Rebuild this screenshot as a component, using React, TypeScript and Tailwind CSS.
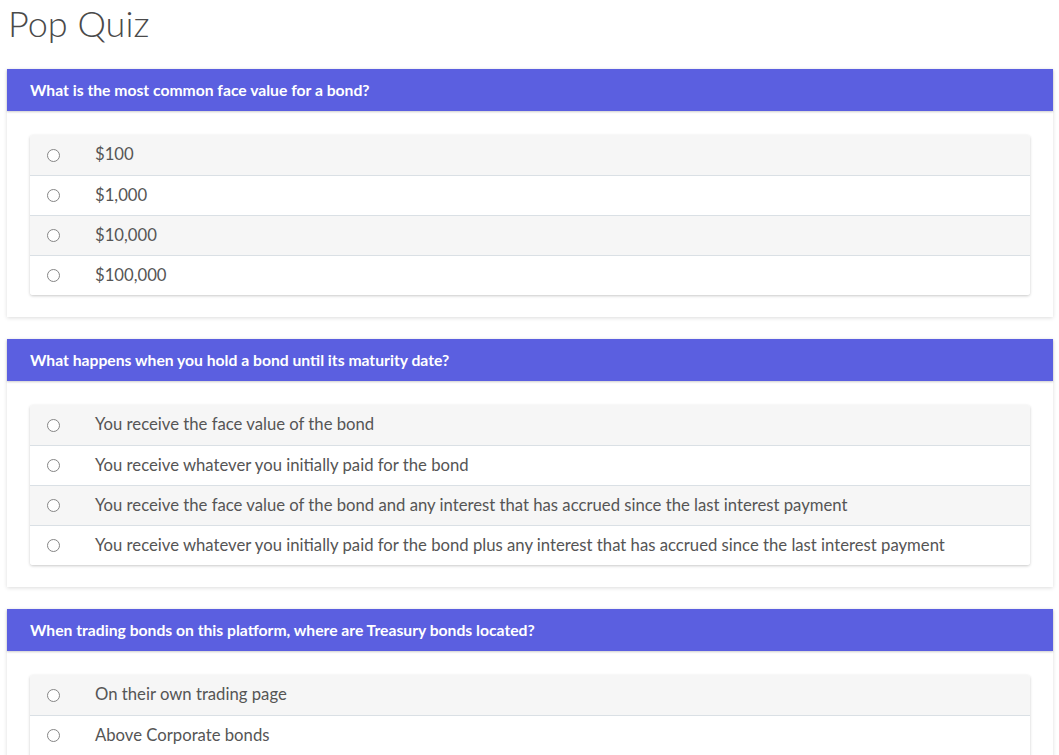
import React from "react";

type Question = { q: string; answers: string[] };

const QUESTIONS: Question[] = [
  {
    q: "What is the most common face value for a bond?",
    answers: ["$100", "$1,000", "$10,000", "$100,000"],
  },
  {
    q: "What happens when you hold a bond until its maturity date?",
    answers: [
      "You receive the face value of the bond",
      "You receive whatever you initially paid for the bond",
      "You receive the face value of the bond and any interest that has accrued since the last interest payment",
      "You receive whatever you initially paid for the bond plus any interest that has accrued since the last interest payment",
    ],
  },
  {
    q: "When trading bonds on this platform, where are Treasury bonds located?",
    answers: [
      "On their own trading page",
      "Above Corporate bonds",
      "Below Corporate bonds",
      "Next to Municipal bonds",
    ],
  },
];

function QuizCard({ item }: { item: Question }) {
  return (
    <div className="mb-[22px] bg-white shadow-[0_1px_4px_rgba(0,0,0,0.14)]">
      {/* question header */}
      <div className="flex h-[42px] items-center bg-[#5b5fe0] px-[23px] pt-px text-[15.7px] font-bold text-white shadow-[0_1px_2px_rgba(0,0,0,0.2)]">
        {item.q}
      </div>
      <div className="px-[23px] pb-[22px] pt-[24px]">
        <ul className="overflow-hidden rounded-[3px] shadow-[0_1px_3px_rgba(0,0,0,0.22)]">
          {item.answers.map((a, i) => (
            <li
              key={a}
              className={`flex h-[40px] items-center border-t border-[#dae0e5] first:border-t-0 ${
                i % 2 === 0 ? "bg-[#f6f6f6]" : "bg-white"
              }`}
            >
              <span className="ml-[17px] h-[13px] w-[13px] shrink-0 rounded-full border border-[#858585] bg-white" />
              <span className="ml-[35px] whitespace-nowrap text-[16.7px] text-[#555]">{a}</span>
            </li>
          ))}
        </ul>
      </div>
    </div>
  );
}

export default function App() {
  return (
    <div
      className="min-h-screen bg-white pl-[7px] pr-[6px]"
      style={{ fontFamily: "Lato, 'Open Sans', sans-serif" }}
    >
      <h1 className="mb-[24px] pl-px pt-[2px] text-[36px] font-light leading-[43px] text-[#4a4a4a]">
        Pop Quiz
      </h1>
      {QUESTIONS.map((item) => (
        <QuizCard key={item.q} item={item} />
      ))}
    </div>
  );
}
